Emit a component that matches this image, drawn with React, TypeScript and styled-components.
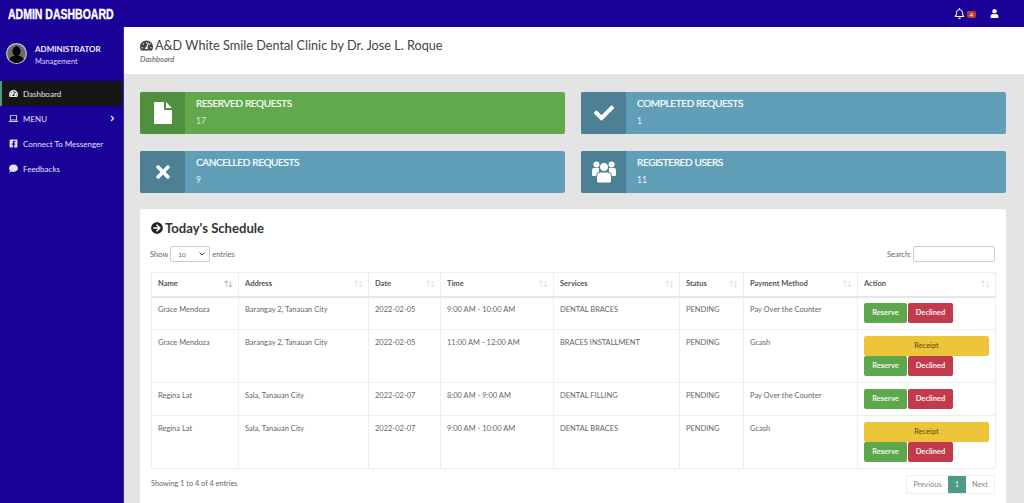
import React from "react";
import styled, { createGlobalStyle } from "styled-components";
import {
  FaAngleRight,
  FaArrowCircleRight,
  FaCheck,
  FaComment,
  FaFacebookSquare,
  FaLaptop,
  FaRegBell,
  FaTachometerAlt,
  FaTimes,
  FaUser,
} from "react-icons/fa";

const GlobalStyle = createGlobalStyle`
  html, body {
    margin: 0;
    padding: 0;
    height: 503px;
    overflow: hidden;
    background: #e4e4e4;
    font-family: Lato, "Liberation Sans", sans-serif;
  }
  * { box-sizing: border-box; }
`;

const Page = styled.div`
  width: 1024px;
  height: 503px;
  display: flex;
  flex-direction: column;
  overflow: hidden;
`;

const TopBar = styled.header`
  height: 27px;
  flex: none;
  background: #1b0097;
  display: flex;
  align-items: center;
  justify-content: space-between;
  padding: 0 25px 0 8px;
`;

const Brand = styled.div`
  font-family: "Liberation Sans", sans-serif;
  font-weight: 700;
  font-size: 15px;
  color: #fff;
  -webkit-text-stroke: 0.4px #fff;
  transform: scaleX(0.7);
  transform-origin: left center;
`;

const TopIcons = styled.div`
  display: flex;
  align-items: center;
  gap: 14px;
  color: #fff;
  font-size: 9px;
`;

const BellWrap = styled.span`
  position: relative;
  display: flex;
  padding-right: 11px;
  font-size: 11px;
`;

const Badge = styled.span`
  position: absolute;
  right: 0;
  top: 3px;
  width: 9px;
  height: 7px;
  border-radius: 2px;
  background: #c0392b;
  font-size: 6px;
  line-height: 7px;
  text-align: center;
`;

const Body = styled.div`
  flex: 1;
  display: flex;
  min-height: 0;
`;

const Sidebar = styled.aside`
  width: 124px;
  flex: none;
  background: #1b0097;
  border-right: 1px solid #3a2cb0;
  color: #e3e0f7;
`;

const Profile = styled.div`
  height: 54px;
  padding: 16px 0 0 6px;
  display: flex;
  gap: 8px;
`;

const Avatar = styled.svg`
  width: 21px;
  height: 21px;
  flex: none;
`;

const ProfileName = styled.div`
  font-size: 8px;
  font-weight: 700;
  line-height: 11px;
  margin-top: 1px;
  color: #f0eefb;
`;

const ProfileRole = styled.div`
  font-size: 7.4px;
  line-height: 11px;
  margin-top: 1px;
  color: #dcd8f5;
`;

const NavItem = styled.div<{ $active?: boolean }>`
  height: 25px;
  display: flex;
  align-items: center;
  gap: 5px;
  font-size: 8px;
  color: ${(p) => (p.$active ? "#e8e8e8" : "#e3e0f7")};
  background: ${(p) => (p.$active ? "#161616" : "transparent")};
  border-left: ${(p) => (p.$active ? "2px solid #4d9a8a" : "none")};
  padding-left: ${(p) => (p.$active ? "7px" : "9px")};
  svg {
    font-size: 9px;
    flex: none;
  }
`;

const NavCaret = styled.span`
  margin-left: auto;
  margin-right: 6px;
  display: flex;
`;

const Main = styled.main`
  flex: 1;
  min-width: 0;
  display: flex;
  flex-direction: column;
`;

const PageHead = styled.div`
  height: 47px;
  flex: none;
  background: #fff;
  padding: 10px 16px 0;
`;

const PageTitle = styled.h1`
  margin: 0;
  display: flex;
  align-items: center;
  gap: 2px;
  font-size: 12.7px;
  font-weight: 400;
  line-height: 17px;
  color: #444;
  svg {
    font-size: 13px;
    color: #444;
  }
`;

const Crumb = styled.div`
  font-size: 7.5px;
  font-style: italic;
  line-height: 10px;
  margin-top: 1px;
  color: #555;
`;

const Content = styled.div`
  padding: 18px 18px 0 16px;
`;

const CardGrid = styled.div`
  display: grid;
  grid-template-columns: 425px 425px;
  gap: 17px 16px;
`;

const Card = styled.div<{ $tone: "green" | "blue" }>`
  height: 42px;
  display: flex;
  border-radius: 2px;
  overflow: hidden;
  color: #fff;
  background: ${(p) => (p.$tone === "green" ? "#62a94d" : "#619fb9")};
`;

const CardIcon = styled.div<{ $tone: "green" | "blue" }>`
  width: 45px;
  flex: none;
  display: flex;
  align-items: center;
  justify-content: center;
  font-size: 20px;
  background: ${(p) => (p.$tone === "green" ? "#4f8f3d" : "#4d7f95")};
`;

const CardText = styled.div`
  padding: 5px 0 0 11px;
`;

const CardTitle = styled.div`
  font-size: 10px;
  font-weight: 400;
  line-height: 13px;
  letter-spacing: -0.35px;
  -webkit-text-stroke: 0.2px #fff;
`;

const CardValue = styled.div<{ $tone: "green" | "blue" }>`
  font-size: 8.5px;
  line-height: 11px;
  margin-top: 6px;
  color: ${(p) => (p.$tone === "green" ? "#d3f0c6" : "#e6f2f7")};
`;

const Panel = styled.section`
  margin-top: 16px;
  height: 320px;
  background: #fff;
  border-radius: 2px;
  padding: 10px 11px 0;
`;

const PanelTitle = styled.h2`
  margin: 0;
  display: flex;
  align-items: center;
  gap: 2px;
  font-size: 13.1px;
  font-weight: 700;
  line-height: 18px;
  color: #333;
  svg {
    font-size: 12px;
    color: #222;
  }
`;

const Controls = styled.div`
  margin: 8px 0 0 -1px;
  height: 18px;
  display: flex;
  align-items: center;
  justify-content: space-between;
  font-size: 7.5px;
  color: #666;
`;

const ControlGroup = styled.label`
  display: flex;
  align-items: center;
  gap: 2px;
`;

const FakeSelect = styled.div`
  width: 40px;
  height: 16px;
  border: 1px solid #ccc;
  border-radius: 2px;
  padding: 0 4px 0 7px;
  display: flex;
  align-items: center;
  justify-content: space-between;
  font-size: 6.5px;
  color: #666;
`;

const Chevron = styled.svg`
  width: 6px;
  height: 4px;
`;

const SearchBox = styled.div`
  width: 82px;
  height: 16px;
  border: 1px solid #ccc;
  border-radius: 2px;
`;

const Table = styled.table`
  margin-top: 9px;
  width: 844px;
  border-collapse: collapse;
  table-layout: fixed;
  font-size: 7.5px;
  color: #666;
  border: 1px solid #eee;
  tbody tr:first-child td {
    padding-top: 6px;
  }
`;

const Th = styled.th`
  height: 24px;
  padding: 0 6px 2px;
  text-align: left;
  font-weight: 700;
  color: #555;
  border: 1px solid #eee;
  border-bottom: 2px solid #e6e6e6;
`;

const ThInner = styled.div`
  display: flex;
  align-items: center;
  justify-content: space-between;
`;

const SortMark = styled.span<{ $on?: boolean }>`
  font-size: 7px;
  font-weight: 400;
  letter-spacing: -1px;
  color: ${(p) => (p.$on ? "#999" : "#d8d8d8")};
`;

const Td = styled.td`
  padding: 7px 6px 0;
  vertical-align: top;
  line-height: 11px;
  border: 1px solid #eee;
`;

const Row = styled.tr<{ $tall: boolean }>`
  height: ${(p) => (p.$tall ? "53px" : "33px")};
`;

const Actions = styled.div`
  display: flex;
  flex-wrap: wrap;
  margin-top: -1px;
`;

const Btn = styled.div<{ $kind: "reserve" | "decline" | "receipt" }>`
  height: 20px;
  line-height: 20px;
  border-radius: 2px;
  text-align: center;
  font-size: 7.5px;
  font-weight: ${(p) => (p.$kind === "receipt" ? 400 : 700)};
  width: ${(p) => (p.$kind === "receipt" ? "100%" : p.$kind === "reserve" ? "43px" : "45px")};
  margin-right: ${(p) => (p.$kind === "reserve" ? "1px" : "0")};
  color: ${(p) => (p.$kind === "receipt" ? "#5c4a10" : "#f4f4f4")};
  background: ${(p) =>
    p.$kind === "receipt" ? "#edc53a" : p.$kind === "reserve" ? "#5da84d" : "#c23a4b"};
`;

const Footer = styled.div`
  margin-top: 6px;
  display: flex;
  align-items: flex-start;
  justify-content: space-between;
  font-size: 7.5px;
  color: #666;
`;

const FooterInfo = styled.div`
  padding-top: 4px;
  font-size: 7.3px;
`;

const Pager = styled.div`
  display: flex;
  height: 19px;
  border: 1px solid #eee;
  border-radius: 2px;
  color: #888;
`;

const PagerItem = styled.div<{ $current?: boolean }>`
  padding: 0 ${(p) => (p.$current ? "7px" : "6px")};
  line-height: 17px;
  color: ${(p) => (p.$current ? "#e8f3f0" : "#888")};
  background: ${(p) => (p.$current ? "#4d9a8a" : "transparent")};
`;

const FileIcon = () => (
  <svg width="18" height="22" viewBox="0 0 18 22">
    <path d="M1 0H10V8H18V21a1 1 0 0 1-1 1H1a1 1 0 0 1-1-1V1a1 1 0 0 1 1-1z" fill="#fff" />
    <path d="M12 0 18 6H12z" fill="#fff" />
  </svg>
);

const UsersIcon = () => (
  <svg width="24" height="22" viewBox="0 0 24 22">
    <circle cx="4.500" cy="3.500" r="3" fill="#fff" />
    <circle cx="19.500" cy="3.500" r="3" fill="#fff" />
    <path d="M0 9a2 2 0 0 1 2-2h5v8H1a1 1 0 0 1-1-1z" fill="#fff" />
    <path d="M24 9a2 2 0 0 0-2-2h-5v8h6a1 1 0 0 0 1-1z" fill="#fff" />
    <circle cx="12" cy="6" r="4.500" fill="#fff" stroke="#4d7f95" strokeWidth="1" />
    <path
      d="M4.500 15a4 4 0 0 1 4-4h7a4 4 0 0 1 4 4v5a2 2 0 0 1-2 2h-11a2 2 0 0 1-2-2z"
      fill="#fff"
      stroke="#4d7f95"
      strokeWidth="1"
    />
  </svg>
);

const columns = [
  { name: "Address", width: 130 },
  { name: "Date", width: 72 },
  { name: "Time", width: 113 },
  { name: "Services", width: 126 },
  { name: "Status", width: 64 },
  { name: "Payment Method", width: 114 },
  { name: "Action", width: 138 },
];

const rows = [
  ["Grace Mendoza", "Barangay 2, Tanauan City", "2022-02-05", "9:00 AM - 10:00 AM", "DENTAL BRACES", "PENDING", "Pay Over the Counter"],
  ["Grace Mendoza", "Barangay 2, Tanauan City", "2022-02-05", "11:00 AM - 12:00 AM", "BRACES INSTALLMENT", "PENDING", "Gcash"],
  ["Regina Lat", "Sala, Tanauan City", "2022-02-07", "8:00 AM - 9:00 AM", "DENTAL FILLING", "PENDING", "Pay Over the Counter"],
  ["Regina Lat", "Sala, Tanauan City", "2022-02-07", "9:00 AM - 10:00 AM", "DENTAL BRACES", "PENDING", "Gcash"],
];

const cards = [
  { title: "RESERVED REQUESTS", value: "17", tone: "green" as const, icon: <FileIcon /> },
  { title: "COMPLETED REQUESTS", value: "1", tone: "blue" as const, icon: <FaCheck /> },
  { title: "CANCELLED REQUESTS", value: "9", tone: "blue" as const, icon: <FaTimes /> },
  { title: "REGISTERED USERS", value: "11", tone: "blue" as const, icon: <UsersIcon /> },
];

const App = () => {
  return (
    <Page>
      <GlobalStyle />
      <TopBar>
        <Brand>ADMIN DASHBOARD</Brand>
        <TopIcons>
          <BellWrap>
            <FaRegBell />
            <Badge>4</Badge>
          </BellWrap>
          <FaUser />
        </TopIcons>
      </TopBar>
      <Body>
        <Sidebar>
          <Profile>
            <Avatar viewBox="0 0 21 21">
              <circle cx="10.500" cy="10.500" r="10.500" fill="#c4c4c4" />
              <circle cx="10.500" cy="10.500" r="9.300" fill="#6a6a6a" />
              <ellipse cx="10.500" cy="8.300" rx="4" ry="5" fill="#050505" />
              <path d="M3.200 16.500c1-3 4-4 7.300-4s6.300 1 7.300 4a9.300 9.300 0 0 1-14.600 0z" fill="#050505" />
            </Avatar>
            <div>
              <ProfileName>ADMINISTRATOR</ProfileName>
              <ProfileRole>Management</ProfileRole>
            </div>
          </Profile>
          <nav>
            <NavItem $active>
              <FaTachometerAlt />
              Dashboard
            </NavItem>
            <NavItem>
              <FaLaptop />
              MENU
              <NavCaret>
                <FaAngleRight />
              </NavCaret>
            </NavItem>
            <NavItem>
              <FaFacebookSquare />
              Connect To Messenger
            </NavItem>
            <NavItem>
              <FaComment />
              Feedbacks
            </NavItem>
          </nav>
        </Sidebar>
        <Main>
          <PageHead>
            <PageTitle>
              <FaTachometerAlt />
              A&amp;D White Smile Dental Clinic by Dr. Jose L. Roque
            </PageTitle>
            <Crumb>Dashboard</Crumb>
          </PageHead>
          <Content>
            <CardGrid>
              {cards.map((c) => (
                <Card key={c.title} $tone={c.tone}>
                  <CardIcon $tone={c.tone}>{c.icon}</CardIcon>
                  <CardText>
                    <CardTitle>{c.title}</CardTitle>
                    <CardValue $tone={c.tone}>{c.value}</CardValue>
                  </CardText>
                </Card>
              ))}
            </CardGrid>
            <Panel>
              <PanelTitle>
                <FaArrowCircleRight />
                Today's Schedule
              </PanelTitle>
              <Controls>
                <ControlGroup>
                  Show
                  <FakeSelect>
                    10
                    <Chevron viewBox="0 0 6 4">
                      <path d="M0.500 0.500 3 3 5.500 0.500" fill="none" stroke="#444" strokeWidth="1" />
                    </Chevron>
                  </FakeSelect>
                  entries
                </ControlGroup>
                <ControlGroup>
                  Search:
                  <SearchBox />
                </ControlGroup>
              </Controls>
              <Table>
                <colgroup>
                  <col style={{ width: 87 }} />
                  {columns.map((c) => (
                    <col key={c.name} style={{ width: c.width }} />
                  ))}
                </colgroup>
                <thead>
                  <tr>
                    <Th>
                      <ThInner>
                        Name
                        <SortMark $on>↑↓</SortMark>
                      </ThInner>
                    </Th>
                    {columns.map((c) => (
                      <Th key={c.name}>
                        <ThInner>
                          {c.name}
                          <SortMark>↑↓</SortMark>
                        </ThInner>
                      </Th>
                    ))}
                  </tr>
                </thead>
                <tbody>
                  {rows.map((r, i) => {
                    const tall = r[6] === "Gcash";
                    return (
                      <Row key={i} $tall={tall}>
                        {r.map((cell, j) => (
                          <Td key={j}>{cell}</Td>
                        ))}
                        <Td>
                          <Actions>
                            {tall && <Btn $kind="receipt">Receipt</Btn>}
                            <Btn $kind="reserve">Reserve</Btn>
                            <Btn $kind="decline">Declined</Btn>
                          </Actions>
                        </Td>
                      </Row>
                    );
                  })}
                </tbody>
              </Table>
              <Footer>
                <FooterInfo>Showing 1 to 4 of 4 entries</FooterInfo>
                <Pager>
                  <PagerItem>Previous</PagerItem>
                  <PagerItem $current>1</PagerItem>
                  <PagerItem>Next</PagerItem>
                </Pager>
              </Footer>
            </Panel>
          </Content>
        </Main>
      </Body>
    </Page>
  );
};

export default App;
